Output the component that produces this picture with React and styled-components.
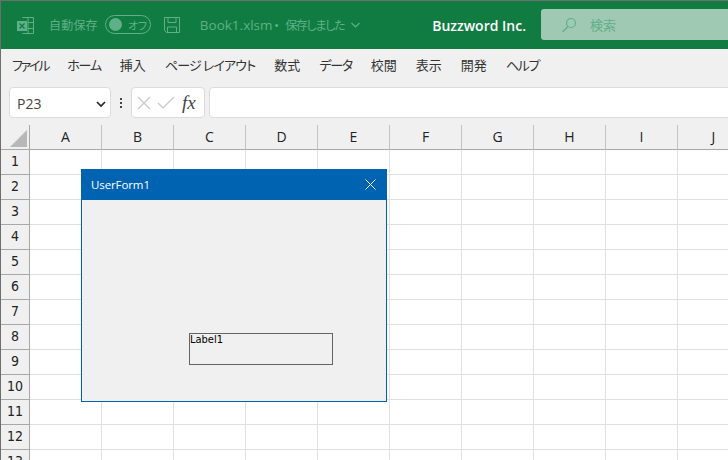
import React from 'react'
import styled, { createGlobalStyle } from 'styled-components'

const GlobalStyle = createGlobalStyle`
  html, body { margin: 0; padding: 0; background: #fff; overflow: hidden; }
  * { box-sizing: border-box; }
`

const Page = styled.div`
  position: relative;
  width: 728px;
  height: 460px;
  overflow: hidden;
  display: flex;
  flex-direction: column;
  background: #f0f0f0;
  border-top: 1px solid #6e6e6e;
  border-left: 1px solid #6e6e6e;
  font-family: "Noto Sans CJK JP", "Liberation Sans", sans-serif;
  font-feature-settings: "palt";
`

const TitleBar = styled.div`
  height: 48px;
  flex: none;
  background: #107c41;
  display: flex;
  align-items: center;
  padding-left: 16px;
  color: #5fb088;
  font-size: 12px;
`

const AutoSave = styled.span`
  margin-left: 15px;
  margin-bottom: 1px;
  letter-spacing: .2px;
`

const Toggle = styled.div`
  width: 46px;
  height: 19px;
  margin: 0 0 1px 7px;
  flex: none;
  border: 1px solid #5fb088;
  border-radius: 10px;
  display: flex;
  align-items: center;
  padding-left: 3px;
  gap: 6px;
  font-size: 11px;
  white-space: nowrap;
`

const Knob = styled.div`
  width: 13px;
  height: 13px;
  flex: none;
  border-radius: 50%;
  background: #5fb088;
`

const FileName = styled.span`
  margin-left: 20px;
  margin-bottom: 1px;
  white-space: nowrap;
  font-family: "Open Sans", sans-serif;
  font-size: 13.500px;
  word-spacing: -2px;
`

const SaveState = styled.span`
  margin-left: 6px;
  margin-bottom: 1px;
  white-space: nowrap;
  letter-spacing: -1.300px;
`

const Company = styled.span`
  margin-left: auto;
  font-family: "Open Sans", sans-serif;
  font-size: 14px;
  font-weight: 600;
  color: #fff;
  white-space: nowrap;
`

const SearchBox = styled.div`
  width: 200px;
  height: 31px;
  margin: 0 -13px 1px 15px;
  flex: none;
  background: #9fc9b3;
  border-radius: 3px;
  display: flex;
  align-items: center;
  padding-left: 20px;
  gap: 13px;
  color: #5fb088;
  font-size: 13px;
`

const MenuBar = styled.div`
  height: 32px;
  flex: none;
  display: flex;
  align-items: center;
  padding: 0 0 2px 11px;
  gap: 19px;
  font-size: 13px;
  color: #333;
`

const MenuItem = styled.span`
  white-space: nowrap;
  letter-spacing: ${p => p.$tight || 0}px;
`

const FormulaRow = styled.div`
  height: 44px;
  flex: none;
  display: flex;
  align-items: center;
  padding: 6px 0 7px 8px;
`

const Field = styled.div`
  height: 31px;
  background: #fff;
  border: 1px solid #dcdcdc;
  border-radius: 4px;
  display: flex;
  align-items: center;
`

const NameBox = styled(Field)`
  width: 102px;
  padding: 2px 3px 0 7px;
  justify-content: space-between;
  font-family: "Open Sans", sans-serif;
  font-size: 14px;
  color: #444;
`

const Dots = styled.div`
  width: 20px;
  display: flex;
  flex-direction: column;
  align-items: center;
  gap: 2px;
`

const Dot = styled.i`
  width: 2px;
  height: 2px;
  background: #444;
`

const FxBox = styled(Field)`
  width: 74px;
  padding-left: 5px;
  gap: 6px;
`

const Fx = styled.span`
  font-family: "Liberation Serif", serif;
  font-style: italic;
  font-size: 19px;
  color: #444;
  margin-left: 1px;
`

const FormulaInput = styled(Field)`
  flex: 1;
  margin-left: 4px;
  margin-right: -8px;
`

const Sheet = styled.div`
  flex: 1;
  display: grid;
  grid-template-columns: 29px repeat(10, 72px);
  grid-auto-rows: 25px;
  background: #fff;
`

const Corner = styled.div`
  background: #f0f0f0;
  border-right: 1px solid #a8a8a8;
  border-bottom: 1px solid #a8a8a8;
  position: relative;
  &::after {
    content: '';
    position: absolute;
    right: 2px;
    bottom: 2px;
    border-style: solid;
    border-width: 0 0 17px 17px;
    border-color: transparent transparent #b8b8b8 transparent;
  }
`

const ColHead = styled.div`
  background: #f0f0f0;
  border-bottom: 1px solid #a8a8a8;
  border-right: 1px solid #c4c4c4;
  display: flex;
  align-items: center;
  justify-content: center;
  padding-bottom: 1px;
  font-family: "Open Sans", sans-serif;
  font-size: 14px;
  color: #222;
`

const RowHead = styled.div`
  background: #f0f0f0;
  border-right: 1px solid #a8a8a8;
  border-bottom: 1px solid #a8a8a8;
  display: flex;
  align-items: center;
  justify-content: center;
  padding-bottom: 2px;
  font-family: "DejaVu Sans Condensed", "DejaVu Sans", sans-serif;
  font-size: 14px;
  color: #222;
`

const Cell = styled.div`
  border-right: 1px solid #e0e0e0;
  border-bottom: 1px solid #e0e0e0;
`

const FormWindow = styled.div`
  position: absolute;
  left: 80px;
  top: 168px;
  width: 306px;
  height: 233px;
  background: #f0f0f0;
  border: 1px solid #0063b1;
  border-top: 0;
  display: flex;
  flex-direction: column;
`

const FormTitle = styled.div`
  height: 31px;
  margin: 0 -1px;
  flex: none;
  background: #0063b1;
  color: #fff;
  display: flex;
  align-items: center;
  justify-content: space-between;
  padding: 0 11px 0 10px;
  font-family: "Open Sans", sans-serif;
  font-size: 11.500px;
  letter-spacing: -.1px;
`

const Label = styled.div`
  position: absolute;
  left: 107px;
  top: 164px;
  width: 144px;
  height: 32px;
  border: 1px solid #646464;
  font-family: "DejaVu Sans Condensed", "Liberation Sans", sans-serif;
  font-size: 11px;
  line-height: 11px;
  color: #000;
`

const cols = ['A', 'B', 'C', 'D', 'E', 'F', 'G', 'H', 'I', 'J']
const rows = Array.from({ length: 13 }, (_, i) => i + 1)
const menus = [
  { label: 'ファイル', tight: -2.2 },
  { label: 'ホーム', tight: -1.2 },
  { label: '挿入' },
  { label: 'ページ レイアウト', tight: -0.85 },
  { label: '数式' },
  { label: 'データ', tight: -1.3 },
  { label: '校閲' },
  { label: '表示' },
  { label: '開発' },
  { label: 'ヘルプ', tight: -1.3 },
]

function App() {
  return (
    <Page>
      <GlobalStyle />
      <TitleBar>
        <svg width="17" height="17" viewBox="0 0 17 17" fill="none" stroke="#5fb088">
          <path d="M5.500 .5h11v16h-11M11 .5v16M11 5.500h5.500M11 11.500h5.500" />
          <rect x="0" y="4" width="10" height="10" fill="#5fb088" stroke="none" />
          <path d="M2.500 6.500l5 5M7.500 6.500l-5 5" stroke="#107c41" strokeWidth="1.400" />
        </svg>
        <AutoSave>自動保存</AutoSave>
        <Toggle>
          <Knob />
          オフ
        </Toggle>
        <svg width="16" height="16" viewBox="0 0 16 16" fill="none" stroke="#5fb088" style={{ marginLeft: 13 }}>
          <path d="M.5 .5h15v15h-13l-2-2zM4 .5v5h8v-5M3.500 15.500v-5.500h9v5.500" />
        </svg>
        <FileName>Book1.xlsm •</FileName>
        <SaveState>保存しました</SaveState>
        <svg width="9" height="6" viewBox="0 0 9 6" fill="none" stroke="#5fb088" strokeWidth="1.200" style={{ marginLeft: 7 }}>
          <path d="M.5 1l4 4 4-4" />
        </svg>
        <Company>Buzzword Inc.</Company>
        <SearchBox>
          <svg width="16" height="16" viewBox="0 0 16 16" fill="none" stroke="#5fb088" strokeWidth="1.200">
            <circle cx="10" cy="6" r="4.500" />
            <path d="M7 9.500L1.500 15" />
          </svg>
          検索
        </SearchBox>
      </TitleBar>
      <MenuBar>
        {menus.map(m => <MenuItem key={m.label} $tight={m.tight}>{m.label}</MenuItem>)}
      </MenuBar>
      <FormulaRow>
        <NameBox>
          P23
          <svg width="12" height="12" viewBox="0 0 12 12" fill="none" stroke="#222" strokeWidth="1.600">
            <path d="M2 4l4 4 4-4" />
          </svg>
        </NameBox>
        <Dots><Dot /><Dot /><Dot /></Dots>
        <FxBox>
          <svg width="14" height="14" viewBox="0 0 14 14" fill="none" stroke="#c8c8c8" strokeWidth="1.200">
            <path d="M1 1l12 12M13 1L1 13" />
          </svg>
          <svg width="18" height="14" viewBox="0 0 18 14" fill="none" stroke="#c8c8c8" strokeWidth="1.200">
            <path d="M1 7l5 5L17 1" />
          </svg>
          <Fx>fx</Fx>
        </FxBox>
        <FormulaInput />
      </FormulaRow>
      <Sheet>
        <Corner />
        {cols.map(c => <ColHead key={c}>{c}</ColHead>)}
        {rows.map(r => (
          <React.Fragment key={r}>
            <RowHead>{r}</RowHead>
            {cols.map(c => <Cell key={c} />)}
          </React.Fragment>
        ))}
      </Sheet>
      <FormWindow>
        <FormTitle>
          UserForm1
          <svg width="11" height="11" viewBox="0 0 11 11" stroke="#fff">
            <path d="M.5 .5l10 10M10.500 .5l-10 10" />
          </svg>
        </FormTitle>
        <Label>Label1</Label>
      </FormWindow>
    </Page>
  )
}

export default App
